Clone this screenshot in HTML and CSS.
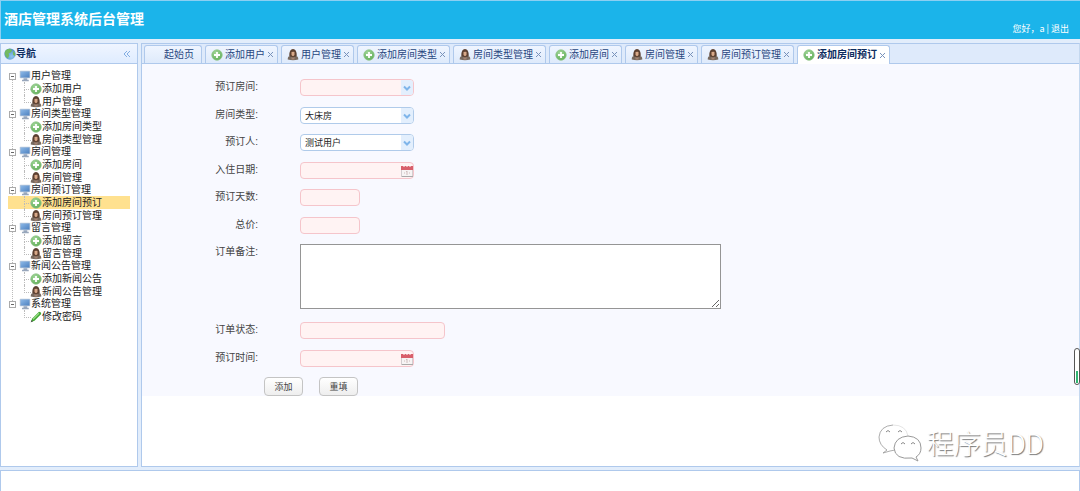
FILE: index.html
```html
<!DOCTYPE html>
<html lang="zh-CN">
<head>
<meta charset="utf-8">
<title>酒店管理系统后台管理</title>
<link rel="stylesheet" href="styles.css">
</head>
<body>
<svg class="sprites" aria-hidden="true">
  <defs>
    <linearGradient id="screen" x1="0" y1="0" x2="1" y2="1"><stop offset="0" stop-color="#8db9e8"/><stop offset="1" stop-color="#4e82c0"/></linearGradient>
    <radialGradient id="green" cx=".4" cy=".3" r=".8"><stop offset="0" stop-color="#a2d79a"/><stop offset="1" stop-color="#5cab54"/></radialGradient>
    <radialGradient id="earth" cx=".65" cy=".7" r=".8"><stop offset="0" stop-color="#8fc5ee"/><stop offset="1" stop-color="#3c82bb"/></radialGradient>
  </defs>
  <symbol id="add" viewBox="0 0 16 16"><circle cx="8" cy="8" r="7" fill="url(#green)" stroke="#93c68e"/><path d="M8 4v8M4 8h8" stroke="#fff" stroke-width="2.4"/></symbol>
  <symbol id="user" viewBox="0 0 16 16"><path d="M1 14v-1q0-4 5-4h4q5 0 5 4v1q-7 2-14 0z" fill="#77695f"/><path d="M3 9Q3 0 8 0t5 9q-5 4-10 0z" fill="#5c4031"/><path d="M6 4q3-1 4 0v4q-2 3-4 0z" fill="#d8a888"/><path d="M6 10l2 2 2-2v4H6z" fill="#a58371"/></symbol>
  <symbol id="pc" viewBox="0 0 16 16"><rect x="1" y="1" width="14" height="10" rx="1" fill="#b8c6d8"/><rect x="2" y="2" width="12" height="8" fill="url(#screen)"/><path d="M6 11h5v2h2v2H4v-2h2z" fill="#98a7bc"/></symbol>
  <symbol id="pencil" viewBox="0 0 16 16"><path d="M1 15l2-5 9-9q3 0 3 3l-9 9z" fill="#42a834"/><path d="M4 11l8-8" stroke="#9bdc86" stroke-width="1.5"/><path d="M1 15l1-3 2 2z" fill="#555"/></symbol>
  <symbol id="globe" viewBox="0 0 16 16"><circle cx="8" cy="8" r="7.5" fill="url(#earth)"/><path d="M1 6q1-5 7-5l3 2-2 3-3 1 1 3-2 4Q1 11 1 6zM12 4l3 3v4l-3-2z" fill="#72b961"/></symbol>
  <symbol id="chevron" viewBox="0 0 12 12"><path d="M3 4.5l3 3 3-3" fill="none" stroke="#7fb5ea" stroke-width="2"/></symbol>
  <symbol id="calendar" viewBox="0 0 12 12"><rect x=".5" y="1.5" width="11" height="10" fill="#f7f4f4" stroke="#d3cdd0"/><path d="M0 1h12v4H0z" fill="#d85f6b"/><path d="M3 0v2M6 0v2M9 0v2" stroke="#fff"/><path d="M6 6v4M5 7l1-1M3 8h1M8 8h1" stroke="#cfbcbc"/><path d="M1 11.5h11" stroke="#aaa"/></symbol>
</svg>

<header class="banner">
  <h1 class="title">酒店管理系统后台管理</h1>
  <div class="session">您好，a | <a class="logout" href="#">退出</a></div>
</header>

<div class="workspace">
  <aside class="sidebar">
    <div class="panel-head">
      <svg class="icon"><use href="#globe"/></svg><h2 class="panel-title">导航</h2>
      <button class="collapse" aria-label="收起导航"><svg class="collapse-icon" viewBox="0 0 8 8"><path d="M4 1L1 4l3 3M7 1L4 4l3 3" fill="none" stroke="#82aee3"/></svg></button>
    </div>
    <ul class="tree">
      <li class="branch"><div class="node"><span class="toggle"></span><svg class="icon"><use href="#pc"/></svg>用户管理</div>
        <ul class="leaves"><li class="leaf"><svg class="icon"><use href="#add"/></svg><a href="#">添加用户</a></li><li class="leaf"><svg class="icon"><use href="#user"/></svg><a href="#">用户管理</a></li></ul></li>
      <li class="branch"><div class="node"><span class="toggle"></span><svg class="icon"><use href="#pc"/></svg>房间类型管理</div>
        <ul class="leaves"><li class="leaf"><svg class="icon"><use href="#add"/></svg><a href="#">添加房间类型</a></li><li class="leaf"><svg class="icon"><use href="#user"/></svg><a href="#">房间类型管理</a></li></ul></li>
      <li class="branch"><div class="node"><span class="toggle"></span><svg class="icon"><use href="#pc"/></svg>房间管理</div>
        <ul class="leaves"><li class="leaf"><svg class="icon"><use href="#add"/></svg><a href="#">添加房间</a></li><li class="leaf"><svg class="icon"><use href="#user"/></svg><a href="#">房间管理</a></li></ul></li>
      <li class="branch"><div class="node"><span class="toggle"></span><svg class="icon"><use href="#pc"/></svg>房间预订管理</div>
        <ul class="leaves"><li class="leaf selected"><svg class="icon"><use href="#add"/></svg><a href="#">添加房间预订</a></li><li class="leaf"><svg class="icon"><use href="#user"/></svg><a href="#">房间预订管理</a></li></ul></li>
      <li class="branch"><div class="node"><span class="toggle"></span><svg class="icon"><use href="#pc"/></svg>留言管理</div>
        <ul class="leaves"><li class="leaf"><svg class="icon"><use href="#add"/></svg><a href="#">添加留言</a></li><li class="leaf"><svg class="icon"><use href="#user"/></svg><a href="#">留言管理</a></li></ul></li>
      <li class="branch"><div class="node"><span class="toggle"></span><svg class="icon"><use href="#pc"/></svg>新闻公告管理</div>
        <ul class="leaves"><li class="leaf"><svg class="icon"><use href="#add"/></svg><a href="#">添加新闻公告</a></li><li class="leaf"><svg class="icon"><use href="#user"/></svg><a href="#">新闻公告管理</a></li></ul></li>
      <li class="branch"><div class="node"><span class="toggle"></span><svg class="icon"><use href="#pc"/></svg>系统管理</div>
        <ul class="leaves"><li class="leaf"><svg class="icon"><use href="#pencil"/></svg><a href="#">修改密码</a></li></ul></li>
    </ul>
  </aside>

  <main class="content">
    <nav class="tabs">
      <div class="tab home"><a href="#">起始页</a></div>
      <div class="tab"><svg class="icon"><use href="#add"/></svg><a href="#">添加用户</a><button class="close" aria-label="关闭"></button></div>
      <div class="tab"><svg class="icon"><use href="#user"/></svg><a href="#">用户管理</a><button class="close" aria-label="关闭"></button></div>
      <div class="tab"><svg class="icon"><use href="#add"/></svg><a href="#">添加房间类型</a><button class="close" aria-label="关闭"></button></div>
      <div class="tab"><svg class="icon"><use href="#user"/></svg><a href="#">房间类型管理</a><button class="close" aria-label="关闭"></button></div>
      <div class="tab"><svg class="icon"><use href="#add"/></svg><a href="#">添加房间</a><button class="close" aria-label="关闭"></button></div>
      <div class="tab"><svg class="icon"><use href="#user"/></svg><a href="#">房间管理</a><button class="close" aria-label="关闭"></button></div>
      <div class="tab"><svg class="icon"><use href="#user"/></svg><a href="#">房间预订管理</a><button class="close" aria-label="关闭"></button></div>
      <div class="tab active"><svg class="icon"><use href="#add"/></svg><a href="#">添加房间预订</a><button class="close" aria-label="关闭"></button></div>
    </nav>

    <form class="booking">
      <div class="fields">
        <label for="room">预订房间:</label>
        <div class="control medium"><select id="room" class="field invalid"><option></option></select><span class="arrow"><svg class="mark"><use href="#chevron"/></svg></span></div>
        <label for="type">房间类型:</label>
        <div class="control medium"><select id="type" class="field"><option>大床房</option></select><span class="arrow"><svg class="mark"><use href="#chevron"/></svg></span></div>
        <label for="guest">预订人:</label>
        <div class="control medium"><select id="guest" class="field"><option>测试用户</option></select><span class="arrow"><svg class="mark"><use href="#chevron"/></svg></span></div>
        <label for="checkin">入住日期:</label>
        <div class="control medium"><input id="checkin" class="field invalid" type="text"><span class="arrow plain"><svg class="mark"><use href="#calendar"/></svg></span></div>
        <label for="days">预订天数:</label>
        <div class="control small"><input id="days" class="field invalid" type="text"></div>
        <label for="price">总价:</label>
        <div class="control small"><input id="price" class="field invalid" type="text"></div>
        <label for="memo">订单备注:</label>
        <textarea id="memo" class="memo"></textarea>
        <label for="state">订单状态:</label>
        <div class="control wide"><input id="state" class="field invalid" type="text"></div>
        <label for="time">预订时间:</label>
        <div class="control medium"><input id="time" class="field invalid" type="text"><span class="arrow plain"><svg class="mark"><use href="#calendar"/></svg></span></div>
      </div>
      <div class="actions"><button type="button" class="action">添加</button><button type="reset" class="action">重填</button></div>
    </form>

    <div class="gauge"><span class="gauge-fill"></span></div>
    <div class="watermark">
      <svg class="bubbles" viewBox="0 0 46 38">
        <g fill="#fff" stroke="#999" stroke-width="1">
          <path d="M15 1Q2 2 1 13q0 8 8 13l-4 3 7-2 5-1" stroke-opacity=".8"/>
          <path d="M15 1q13 0 15 11" stroke-opacity=".25"/>
          <path d="M30 12q13 1 13 12 0 6-5 9l2 4-6-3q-17 2-18-10 1-11 14-12z"/>
        </g>
        <path d="M8 8q2-3 4 0M20 8q2-3 4 0M23 20q2-3 4 0M33 20q2-3 4 0" fill="none" stroke="#888"/>
      </svg>
      <span>程序员DD</span>
    </div>
  </main>
</div>
<footer class="bottom"></footer>
</body>
</html>
```
FILE: styles.css
```css
* { box-sizing: border-box; }
body {
  margin: 0;
  min-height: 100vh;
  display: flex;
  flex-direction: column;
  background: #e2edfb;
  color: #333;
  font: 10px/12px "Liberation Sans", "Noto Sans CJK SC", sans-serif;
}
ul { margin: 0; padding: 0; list-style: none; }
a { color: inherit; text-decoration: none; }
button { font: inherit; padding: 0; }
.sprites { position: absolute; width: 0; height: 0; }
.icon { width: 12px; height: 12px; flex: none; }

.banner {
  height: 39px;
  padding: 0 11px 0 3px;
  display: flex;
  justify-content: space-between;
  background: #1bb4ea;
  border-top: 1px solid #8ccff2;
  border-left: 1px solid #8ccff2;
  color: #fff;
}
.title { margin: 8px 0 0; font-size: 14px; line-height: 20px; }
.session { align-self: flex-end; font-family: "Noto Sans CJK SC", sans-serif; font-size: 9px; padding-bottom: 4px; }

.workspace { flex: 1; display: flex; gap: 3px; margin: 4px 0 3px; }
.sidebar { width: 138px; flex: none; background: #fff; border: 1px solid #afc9ec; }
.panel-head {
  height: 20px;
  padding: 0 6px 0 3px;
  display: flex;
  align-items: center;
  background: linear-gradient(#eff5ff, #dfecff);
  border-bottom: 1px solid #afc9ec;
}
.panel-title { margin: 0; font-size: 10px; color: #0e2d5f; }
.collapse { margin-left: auto; border: 0; background: none; display: flex; }
.collapse-icon { width: 8px; height: 8px; }

.tree { padding: 6px 7px; color: #222; }
.branch { position: relative; }
.branch:not(:last-child)::before {
  content: "";
  position: absolute;
  left: 4px; top: 10px; bottom: -3px;
  border-left: 1px dotted #bbb;
}
.node { height: 12px; display: flex; align-items: center; }
.toggle {
  width: 7px; height: 7px;
  margin: 0 3px 0 1px;
  border: 1px solid #aaa;
  background: linear-gradient(#666, #666) center / 3px 1px no-repeat #fff;
}
.leaf { position: relative; height: 13px; padding-left: 22px; display: flex; align-items: center; }
.leaf::before {
  content: "";
  position: absolute;
  left: 16px; top: 0;
  width: 6px; height: 7px;
  border-left: 1px dotted #bbb;
  border-bottom: 1px dotted #bbb;
}
.leaf:not(:last-child)::after {
  content: "";
  position: absolute;
  left: 16px; top: 7px; bottom: 0;
  border-left: 1px dotted #bbb;
}
.selected { background: #ffe18f; }

.content {
  position: relative;
  flex: 1;
  min-width: 0;
  background: #fff;
  border: 1px solid #afc9ec;
  border-right-color: #c4d8ef;
}
.tabs {
  height: 20px;
  padding: 1px 2px 0;
  display: flex;
  gap: 3px;
  background: #deeafb;
  border-bottom: 1px solid #afc9ec;
}
.tab {
  height: 18px;
  padding: 0 4px 0 5px;
  display: flex;
  align-items: center;
  flex: none;
  border: 1px solid #afc9ec;
  border-bottom: 0;
  border-radius: 3px 3px 0 0;
  background: linear-gradient(#eff5ff, #deeafb);
  color: #274680;
}
.tab a { margin: 0 3px 0 2px; }
.home { padding: 0 4px 0 17px; }
.active { height: 19px; background: #fff; color: #0e2d5f; font-weight: bold; }
.close {
  width: 5px; height: 5px;
  border: 0;
  background:
    linear-gradient(45deg, transparent 42%, #7892bb 42% 58%, transparent 58%),
    linear-gradient(-45deg, transparent 42%, #7892bb 42% 58%, transparent 58%);
}

.booking { background: #f8f9ff; padding-top: 15px; }
.fields {
  display: grid;
  grid-template-columns: 116px auto;
  grid-template-rows: 28px 27px 28px 27px 28px 27px 78px 28px 27px;
  column-gap: 42px;
  justify-content: start;
  align-items: start;
}
.fields label { text-align: right; line-height: 15px; color: #444; }
.control { position: relative; }
.small { width: 60px; }
.medium { width: 114px; }
.wide { width: 145px; }
.field {
  display: block;
  width: 100%;
  height: 17px;
  padding: 0 4px;
  appearance: none;
  border: 1px solid #b0cbea;
  border-radius: 4px;
  background: #fff;
  color: #222;
  font: inherit;
  font-size: 9px;
}
.invalid { background: #fff3f3; border-color: #f5c5cb; }
.arrow {
  position: absolute;
  right: 1px; top: 1px; bottom: 1px;
  width: 12px;
  display: flex;
  align-items: center;
  justify-content: center;
  background: #e3effd;
  border-radius: 0 3px 3px 0;
  pointer-events: none;
}
.mark { width: 12px; height: 12px; }
.plain { background: none; }
.memo {
  width: 421px;
  height: 65px;
  border: 1px solid #959595;
  background: #fff;
  font: inherit;
}
.actions { display: flex; gap: 16px; padding-left: 122px; }
.action {
  width: 39px; height: 19px;
  border: 1px solid #c4c4c4;
  border-radius: 4px;
  background: linear-gradient(#fff, #eee);
  color: #444;
  font-size: 9px;
}

.gauge {
  position: absolute;
  right: -1px; top: 304px;
  width: 6px; height: 37px;
  padding: 1px;
  display: flex;
  align-items: flex-end;
  border: 1px solid #555;
  border-radius: 3px;
  background: #fff;
}
.gauge-fill { width: 100%; height: 12px; background: #2fb573; }
.watermark {
  position: absolute;
  right: 35px; bottom: 3px;
  display: flex;
  align-items: center;
  gap: 3px;
  font: 300 27px/40px "Noto Sans CJK SC", sans-serif;
  color: #fff;
  text-shadow: 1px 1px 1px #777;
}
.bubbles { width: 46px; height: 38px; }

.bottom { height: 21px; background: #fff; border: 1px solid #afc9ec; border-bottom: 0; }
```
